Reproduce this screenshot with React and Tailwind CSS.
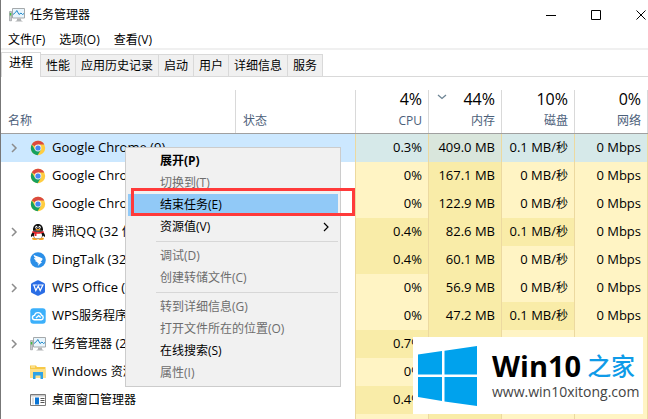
import React, { useState } from "react";

const menus = ["文件(F)", "选项(O)", "查看(V)"];
const tabs = ["进程", "性能", "应用历史记录", "启动", "用户", "详细信息", "服务"];

const columns = [
  { label: "CPU", total: "4%" },
  { label: "内存", total: "44%", sorted: true },
  { label: "磁盘", total: "10%" },
  { label: "网络", total: "0%" },
];

const ChromeIcon = () => (
  <svg viewBox="0 0 16 16" className="size-4 shrink-0">
    <circle cx="8" cy="8" r="7.2" fill="#ffcd40" />
    <path d="M8 8 1.8 4.4A7.2 7.2 0 0 1 14.3 4.5H8Z" fill="#db4a3f" />
    <path d="M1.8 4.4A7.2 7.2 0 0 0 7.6 15.2L11 9.8 8 8 4.8 9.6Z" fill="#16a05f" />
    <circle cx="8" cy="8" r="3.4" fill="#f4f4f4" />
    <circle cx="8" cy="8" r="2.6" fill="#4587f3" />
  </svg>
);

const QQIcon = () => (
  <svg viewBox="0 0 16 16" className="size-4 shrink-0">
    <ellipse cx="5" cy="14.8" rx="3" ry="1.2" fill="#f5a01a" />
    <ellipse cx="11" cy="14.8" rx="3" ry="1.2" fill="#f5a01a" />
    <path d="M3.6 7.2C1.600 9 .6 11 1 12.800c.7.2 1.500-.5 2-1.200.5 2 2.600 3.200 5 3.200s4.500-1.200 5-3.200c.5.7 1.300 1.400 2 1.200.4-1.800-.6-3.800-2.600-5.600Z" fill="#111" />
    <ellipse cx="8" cy="11.400" rx="4" ry="3.200" fill="#fff" />
    <path d="M3 6.800C2.700 2.500 4.800 0 8 0s5.300 2.500 5 6.800Z" fill="#111" />
    <ellipse cx="6.400" cy="3.300" rx="1.100" ry="1.500" fill="#fff" />
    <ellipse cx="9.600" cy="3.300" rx="1.100" ry="1.500" fill="#fff" />
    <circle cx="6.700" cy="3.500" r=".5" fill="#111" />
    <circle cx="9.300" cy="3.500" r=".5" fill="#111" />
    <ellipse cx="8" cy="5.800" rx="2.600" ry=".8" fill="#f5a01a" />
    <path d="M2.600 7c3 1.500 7.800 1.500 10.800 0l.5 1.500c-2.300 1.100-5.200 1.500-7.400 1.300V12H4.600V9.400L2.100 8.500Z" fill="#e8262b" />
  </svg>
);

const DingIcon = () => (
  <svg viewBox="0 0 16 16" className="size-4 shrink-0">
    <circle cx="8" cy="8" r="7.800" fill="#2b8fe8" />
    <path d="M3.600 2.800c2.800 1.500 5.700 2.100 8.400 3.400.7.400.6 1 .2 1.700L10.600 10h1.500l-4.300 4 .9-2.700H7.200l.4-1.400c-1.300.2-2.200-.4-2.600-1.400l1.600.1C5 7.900 4.200 7 4 5.700l2 .6C4.500 5.300 3.700 4.200 3.600 2.800Z" fill="#fff" />
  </svg>
);

const WpsIcon = () => (
  <svg viewBox="0 0 16 16" className="size-4 shrink-0">
    <path d="M7 .5q1-.6 2 0l5 2.400q1 .5 1 1.600v7q0 1-1 1.600l-5 2.400q-1 .6-2 0L2 13.100q-1-.6-1-1.600v-7q0-1.100 1-1.600Z" fill="#2a6de5" />
    <path d="M2.800 5h4M3.800 5l2 5.500L8.200 6l2 4.500L12.900 5H7.500" fill="none" stroke="#fff" strokeWidth="1.200" />
  </svg>
);

const WpsCloudIcon = () => (
  <svg viewBox="0 0 16 16" className="size-4 shrink-0">
    <rect x=".3" y=".3" width="15.400" height="15.400" rx="3" fill="#3cb0fb" />
    <path d="M4.800 11.800a2.200 2.200 0 0 1-.3-4.400 3.600 3.600 0 0 1 7-.1 2.300 2.300 0 0 1-.3 4.500Zm1.200-1.700 2.700-2.500 2 2" fill="none" stroke="#fff" strokeWidth="1.400" />
  </svg>
);

const MonitorIcon = () => (
  <svg viewBox="0 0 16 16" className="size-4 shrink-0">
    <path d="M.5 4.500h2v9.300h-2Z" fill="#c4c8ca" stroke="#8d9194" strokeWidth=".6" />
    <path d="M.8 6h1.400v2.500H.8Z" fill="#3cc13b" />
    <path d="M3.500 1.500h12v9.500h-12Z" fill="#e9f5fc" stroke="#a5a9ab" />
    <path d="M8 11.500h4v1.700l2 1.300H6l2-1.300Z" fill="#b1b4b6" />
    <path d="M4 7.500 6.500 5.500 7.800 3.500l2.200 4L12 6l1.500 1.500 1.500-1" fill="none" stroke="#1e88c9" strokeWidth="1" />
  </svg>
);

const FolderIcon = () => (
  <svg viewBox="0 0 16 16" className="size-4 shrink-0">
    <path d="M0 1.500h6l1 1.500h8.500v11H0Z" fill="#f7c948" />
    <path d="M1 2.500h4v1H1Z" fill="#fff3c4" />
    <path d="M0 5h15.500v9H0Z" fill="#fde08a" />
    <path d="M3 8h10v7h-2.500v-3.500h-5V15H3Z" fill="#2ea3e6" />
  </svg>
);

const DwmIcon = () => (
  <svg viewBox="0 0 16 16" className="size-4 shrink-0">
    <path d="M.5 2.500h15v11H.5Z" fill="#fff" stroke="#7a7a7a" />
    <path d="M1 3h14v1.500H1Z" fill="#c9c9c9" />
    <path d="M2 5.500h2v7H2Z" fill="#ddd" />
    <path d="M5 5.500h4v7H5Z" fill="#0a74d4" />
    <path d="M10.500 6.500h4M10.500 8.500h4M10.500 10.500h4" stroke="#555" strokeWidth="1" />
  </svg>
);

// hot = columns drawn with the darker heat colour
const processes = [
  { name: "Google Chrome (9)", icon: ChromeIcon, group: true, values: ["0.3%", "409.0 MB", "0.1 MB/秒", "0 Mbps"], hot: [1], selected: true },
  { name: "Google Chrome", icon: ChromeIcon, values: ["0%", "167.1 MB", "0 MB/秒", "0 Mbps"], hot: [1] },
  { name: "Google Chrome", icon: ChromeIcon, values: ["0%", "122.9 MB", "0 MB/秒", "0 Mbps"], hot: [1] },
  { name: "腾讯QQ (32 位)", icon: QQIcon, group: true, values: ["0.4%", "82.6 MB", "0.1 MB/秒", "0 Mbps"], hot: [0, 1, 2] },
  { name: "DingTalk (32 位)", icon: DingIcon, values: ["0.4%", "60.1 MB", "0 MB/秒", "0 Mbps"], hot: [0, 1] },
  { name: "WPS Office (32 位)", icon: WpsIcon, group: true, values: ["0%", "56.9 MB", "0 MB/秒", "0 Mbps"], hot: [1] },
  { name: "WPS服务程序", icon: WpsCloudIcon, values: ["0%", "47.2 MB", "0.1 MB/秒", "0 Mbps"], hot: [1, 2] },
  { name: "任务管理器 (2)", icon: MonitorIcon, group: true, values: ["0.7%", "", "", ""], hot: [0, 1] },
  { name: "Windows 资源", icon: FolderIcon, values: ["0%", "", "", ""], hot: [1] },
  { name: "桌面窗口管理器", icon: DwmIcon, values: ["0.4%", "", "", ""], hot: [0, 1] },
];

const contextMenu = [
  [
    { label: "展开(P)", bold: true },
    { label: "切换到(T)", disabled: true },
    { label: "结束任务(E)", marked: true },
    { label: "资源值(V)", submenu: true },
  ],
  [
    { label: "调试(D)", disabled: true },
    { label: "创建转储文件(C)", disabled: true },
  ],
  [
    { label: "转到详细信息(G)", disabled: true },
    { label: "打开文件所在的位置(O)", disabled: true },
    { label: "在线搜索(S)" },
    { label: "属性(I)", disabled: true },
  ],
];

// Chinese runs are set one size smaller than the Latin text
const Mixed = ({ text }) =>
  text.split(/([\u4e00-\u9fff]+)/).map((part, i) =>
    i % 2 ? (
      <span key={i} className="text-[12px]">
        {part}
      </span>
    ) : (
      part
    )
  );

const Chevron = ({ className, width = 1.5 }) => (
  <svg viewBox="0 0 8 10" className={className}>
    <path d="M2 1l4 4-4 4" fill="none" stroke="currentColor" strokeWidth={width} />
  </svg>
);

const cellColor = (row, col) => {
  const hot = row.hot.includes(col);
  if (row.selected) return hot ? "bg-[#d9e6dc]" : "bg-[#d6e9e9]";
  return hot ? "bg-[#f9eca8]" : "bg-[#fff4c4]";
};

const TitleBar = () => (
  <header className="flex h-[30px] items-center pl-2">
    <MonitorIcon />
    <h1 className="ml-[5px] text-[12px]">任务管理器</h1>
    <div className="-mr-[3px] ml-auto flex gap-[26px]">
      <button aria-label="最小化" className="p-1">
        <svg viewBox="0 0 11 11" className="size-[11px]">
          <path d="M0 5.500h10" stroke="#000" />
        </svg>
      </button>
      <button aria-label="最大化" className="p-1">
        <svg viewBox="0 0 11 11" className="size-[11px]">
          <path d="M.5.5h9v9h-9Z" fill="none" stroke="#000" />
        </svg>
      </button>
      <button aria-label="关闭" className="p-1">
        <svg viewBox="0 0 11 11" className="size-[11px]">
          <path d="M.5.5l9 9M9.500.5l-9 9" stroke="#000" />
        </svg>
      </button>
    </div>
  </header>
);

const ContextMenu = () => (
  <div role="menu" className="absolute left-[124px] top-[147px] w-[216px] border border-[#ccc] bg-[#f1f1f1] p-[2px]">
    {contextMenu.map((group, g) => (
      <div key={g}>
        {g > 0 && <div className="my-[3px] ml-7 h-px bg-[#d7d7d7]" />}
        {group.map((item) => (
          <button
            key={item.label}
            role="menuitem"
            disabled={item.disabled}
            className={`relative flex h-[22px] w-full items-center justify-between pl-8 pr-2 text-[12px] ${
              item.bold ? "font-bold" : ""
            } ${item.disabled ? "text-[#6d6d6d]" : "text-black"} ${item.marked ? "bg-[#91c9f7]" : ""}`}
          >
            {item.label}
            {item.submenu && <Chevron className="h-[10px] w-2" width={1.2} />}
            {item.marked && <span className="absolute -right-[17px] -top-[6px] bottom-0 left-[3px] border-3 border-[#ff3a3a]" />}
          </button>
        ))}
      </div>
    ))}
  </div>
);

const Watermark = () => (
  <div className="absolute bottom-[5px] right-[5px] flex h-[77px] w-[230px] items-center bg-white pl-[5px]">
    <svg viewBox="0 0 59 60" className="h-[60px] w-[59px] shrink-0">
      <path d="M0 8.500 24 5v23.500H0ZM26.500 4.700 59 0v28.500H26.500ZM0 31h24v20L24 55 0 51ZM26.500 31H59v29l-32.500-4.500Z" fill="#00a2ed" />
    </svg>
    <div className="ml-[15px] pt-px">
      <div className="flex items-center gap-[6px] whitespace-nowrap text-[29px] font-bold leading-8">
        <span>Win10</span>
        <span className="text-[24px] font-medium text-[#0f9be8]">之家</span>
      </div>
      <div className="text-[14px] leading-5 text-[#444]">www.win10xitong.com</div>
    </div>
  </div>
);

const App = () => {
  const [activeTab, setActiveTab] = useState("进程");

  return (
    <div className="relative h-screen overflow-hidden border-l border-[#777] bg-white font-['Open_Sans','Noto_Sans_CJK_SC',sans-serif] text-black">
      <TitleBar />
      <nav className="flex h-[20px] items-center gap-[14px] border-b-2 border-[#f0f0f0] pl-[7px] pt-[2px] text-[12px] leading-4">
        {menus.map((menu) => (
          <button key={menu}>{menu}</button>
        ))}
      </nav>

      <div role="tablist" className="flex h-[27px] items-end pt-[2px] text-[12px]">
        {tabs.map((tab) => (
          <button
            key={tab}
            role="tab"
            aria-selected={tab === activeTab}
            onClick={() => setActiveTab(tab)}
            className={
              tab === activeTab
                ? "h-[25px] border-l border-r border-t border-[#d9d9d9] bg-white px-[7px] pb-1"
                : "h-[23px] border-b border-r border-t border-[#d9d9d9] bg-[#f0f0f0] px-[5px]"
            }
          >
            {tab}
          </button>
        ))}
        <div className="h-px flex-1 bg-[#d9d9d9]" />
      </div>

      <table className="w-full table-fixed border-separate border-spacing-0 text-[13px]">
        <colgroup>
          <col />
          <col className="w-[120px]" />
          <col className="w-[73px]" />
          <col className="w-[73px]" />
          <col className="w-[73px]" />
          <col className="w-[74px]" />
        </colgroup>
        <thead>
          <tr className="h-[57px] align-bottom text-[12px] text-[#4c607a]">
            <th className="border-b border-[#a0a0a0] p-0 pl-[7px] text-left font-normal leading-[24px]">名称</th>
            <th className="border-b border-[#a0a0a0] p-0 font-normal">
              <div className="flex h-[43px] items-end border-l border-[#d9d9d9] pl-[7px] leading-[24px]">状态</div>
            </th>
            {columns.map((col) => (
              <th key={col.label} className="group border-b border-[#a0a0a0] p-0 font-normal">
                <div className="relative h-[43px] border-l border-[#d9d9d9] pr-[6px] text-right group-last:border-r">
                  {col.sorted && (
                    <svg viewBox="0 0 10 6" className="absolute left-2 top-1 h-[6px] w-[10px]">
                      <path d="M1 1l4 3.500L9 1" fill="none" stroke="#6d8494" strokeWidth="1.300" />
                    </svg>
                  )}
                  <div className="mb-[3px] text-[16px] leading-[18px] text-black">{col.total}</div>
                  <div className="leading-5">{col.label}</div>
                </div>
              </th>
            ))}
          </tr>
        </thead>
        <tbody>
          {processes.map((row, r) => (
            <tr key={r} className={`h-7 ${row.selected ? "bg-[#cce8ff]" : ""}`}>
              <td className="p-0">
                <div className="flex items-center whitespace-nowrap pl-[9px]">
                  <span className="w-5 text-[#8c8c8c]">{row.group && <Chevron className="h-[10px] w-2" />}</span>
                  <row.icon />
                  <span className="ml-[6px]">
                    <Mixed text={row.name} />
                  </span>
                </div>
              </td>
              <td className="p-0" />
              {row.values.map((value, c) => (
                <td
                  key={c}
                  className={`whitespace-nowrap border-l border-[#ecd9a0] py-0 pl-0 pr-[6px] text-right last:border-r ${cellColor(row, c)}`}
                >
                  <Mixed text={value} />
                </td>
              ))}
            </tr>
          ))}
          <tr className="h-7">
            <td />
            <td />
            {columns.map((col, c) => (
              <td
                key={col.label}
                className={`border-l border-[#ecd9a0] last:border-r ${c === 1 ? "bg-[#f9eca8]" : "bg-[#fff4c4]"}`}
              />
            ))}
          </tr>
        </tbody>
      </table>

      <ContextMenu />
      <Watermark />
    </div>
  );
};

export default App;
